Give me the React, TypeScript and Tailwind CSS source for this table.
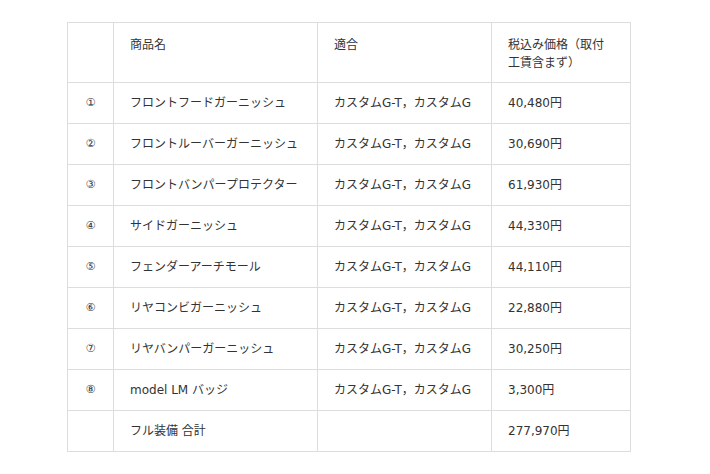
import React from "react";

const rows: [string, string, string, string][] = [
  ["①", "フロントフードガーニッシュ", "カスタムG-T，カスタムG", "40,480円"],
  ["②", "フロントルーバーガーニッシュ", "カスタムG-T，カスタムG", "30,690円"],
  ["③", "フロントバンパープロテクター", "カスタムG-T，カスタムG", "61,930円"],
  ["④", "サイドガーニッシュ", "カスタムG-T，カスタムG", "44,330円"],
  ["⑤", "フェンダーアーチモール", "カスタムG-T，カスタムG", "44,110円"],
  ["⑥", "リヤコンビガーニッシュ", "カスタムG-T，カスタムG", "22,880円"],
  ["⑦", "リヤバンパーガーニッシュ", "カスタムG-T，カスタムG", "30,250円"],
  ["⑧", "model LM バッジ", "カスタムG-T，カスタムG", "3,300円"],
  ["", "フル装備 合計", "", "277,970円"],
];

export default function App() {
  return (
    <div
      className="w-[710px] h-[474px] bg-white pt-[22px] pl-[67px] text-[#333] text-[12px] leading-[18px]"
      style={{ fontFamily: '"DejaVu Sans", "Noto Sans CJK JP", sans-serif' }}
    >
      <table className="border-collapse table-fixed w-[563px]">
        <colgroup>
          <col className="w-[46px]" />
          <col className="w-[204px]" />
          <col className="w-[174px]" />
          <col className="w-[139px]" />
        </colgroup>
        <thead>
          <tr className="h-[60px]">
            <th className="border border-[#ddd] p-0 font-normal"></th>
            <th className="border border-[#ddd] px-4 pt-[13px] align-top text-left font-normal">商品名</th>
            <th className="border border-[#ddd] px-4 pt-[13px] align-top text-left font-normal">適合</th>
            <th className="border border-[#ddd] px-4 pt-[13px] align-top text-left font-normal">
              税込み価格（取付工賃含まず）
            </th>
          </tr>
        </thead>
        <tbody>
          {rows.map((r, i) => (
            <tr key={i} className="h-[41px]">
              <td className="border border-[#ddd] p-0 text-center align-middle text-[11px]">{r[0]}</td>
              <td className="border border-[#ddd] px-4 py-0 align-middle">{r[1]}</td>
              <td className="border border-[#ddd] px-4 py-0 align-middle">{r[2]}</td>
              <td className="border border-[#ddd] px-4 py-0 align-middle">{r[3]}</td>
            </tr>
          ))}
        </tbody>
      </table>
    </div>
  );
}
